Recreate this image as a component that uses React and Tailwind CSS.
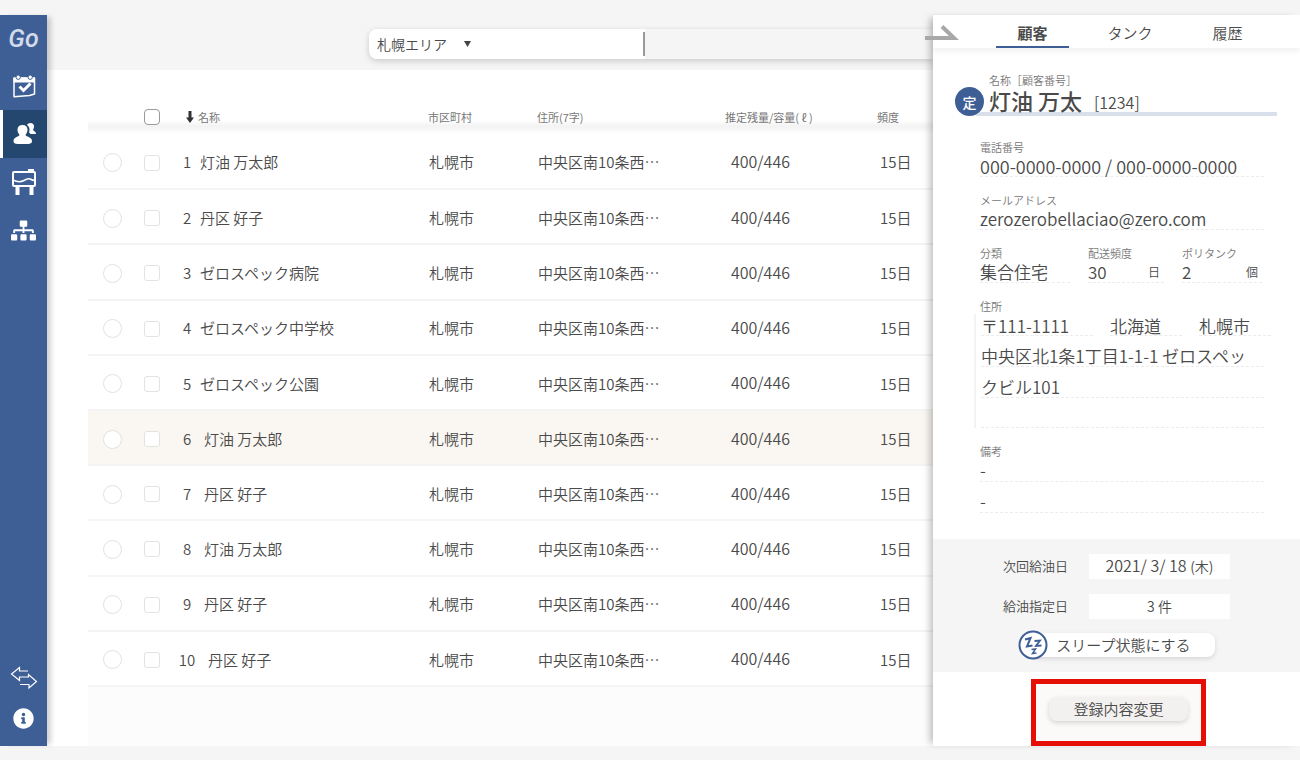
import React from 'react'
import { FaSitemap, FaInfoCircle } from 'react-icons/fa'

const customers = [
  { no: 1, name: '灯油 万太郎', gap: 'ml-0' },
  { no: 2, name: '丹区 好子', gap: 'ml-0' },
  { no: 3, name: 'ゼロスペック病院', gap: 'ml-0' },
  { no: 4, name: 'ゼロスペック中学校', gap: 'ml-0' },
  { no: 5, name: 'ゼロスペック公園', gap: 'ml-0' },
  { no: 6, name: '灯油 万太郎', gap: 'ml-1', active: true },
  { no: 7, name: '丹区 好子', gap: 'ml-1' },
  { no: 8, name: '灯油 万太郎', gap: 'ml-1' },
  { no: 9, name: '丹区 好子', gap: 'ml-1' },
  { no: 10, name: '丹区 好子', gap: 'ml-2' },
]

const CalendarIcon = () => (
  <svg width="24" height="24" viewBox="0 0 24 24" fill="none" stroke="currentColor">
    <path d="M2 4h20.500v16l-5 1.500-15.500 1.300z" strokeWidth="1.500" strokeLinejoin="round" />
    <path d="M2 4h20.500v4H2z" fill="currentColor" strokeWidth="1" />
    <circle cx="6.200" cy="3.200" r="2.200" fill="currentColor" stroke="#3e5f96" strokeWidth="1" />
    <circle cx="18.200" cy="3.200" r="2.200" fill="currentColor" stroke="#3e5f96" strokeWidth="1" />
    <path d="M7.500 12.500l4 4 7-7" strokeWidth="3" />
  </svg>
)

const UsersIcon = () => (
  <svg width="24" height="24" viewBox="0 0 24 24" fill="currentColor">
    <path d="M14 3c1-2.500 6.500-3 7 .8.200 1.700-.4 3-1 3.900.3 1.300 2.800 1.300 3 4.300h-5.500c-.5-.8-1-1.200-1.500-1.500 1-2.500.8-5.500-2-7.500z" />
    <path d="M9.500 3c3.200 0 5 2 5 4.800 0 2.200-.8 3.800-2 4.900 0 2.300 6.500 1.800 6.500 6.300 0 2.200-1.500 3-4 3H4.500c-2.500 0-4-.8-4-3 0-4.500 6-4 6-6.300-1.200-1.100-2-2.700-2-4.900C4.500 5 6.300 3 9.500 3z" />
  </svg>
)

const TankIcon = () => (
  <svg width="26" height="28" viewBox="0 0 26 28" fill="none" stroke="currentColor">
    <rect x="2" y="4" width="22" height="14" rx="1" strokeWidth="2" />
    <path d="M17 2.500h6" strokeWidth="3" />
    <path d="M2 12c4 2 8 2 11 .5s4-2.500 6-1.500 3 1.500 5 1.500" strokeWidth="1.500" />
    <path d="M6.500 18v9M20.500 18v9" strokeWidth="4" />
  </svg>
)

const ExchangeIcon = () => (
  <svg width="28" height="24" viewBox="0 0 28 24" fill="none" stroke="currentColor" strokeWidth="1.200">
    <path d="M18 5H9.500V1.500L1.500 8l8 6.500V11H18.500V8.500L26.500 15.500 19 22v-3.500h-9" />
  </svg>
)

const SleepIcon = () => (
  <svg className="relative shrink-0" width="30" height="30" viewBox="0 0 30 30" fill="none" stroke="#3e5f96">
    <circle cx="15" cy="15" r="13.500" fill="white" strokeWidth="2" />
    <path d="M7 9.500l5.500-1.500-3.500 8.500 5.500-1" strokeWidth="2" />
    <path d="M16.500 11l5.500-.5-4 5.500 5.500-.5" strokeWidth="1.800" />
    <path d="M13.500 19.500l4-.5-3 4.500 4-.5" strokeWidth="1.500" />
  </svg>
)

const NavItem = ({ label, active, children }) => (
  <button
    aria-label={label}
    className={`flex h-12 w-full items-center justify-center text-white ${active ? 'border-l-3 border-white bg-[#24476f]' : ''}`}
  >
    {children}
  </button>
)

const Sidebar = () => (
  <nav className="relative flex w-[47px] shrink-0 flex-col bg-[#3e5f96] shadow-[6px_0_5px_-2px_rgba(0,0,0,0.18)]">
    <div className="flex h-12 items-center justify-center font-['Roboto'] text-[25px] font-medium italic text-[#d3daea]">Go</div>
    <div className="-mt-px">
      <NavItem label="カレンダー"><CalendarIcon /></NavItem>
      <NavItem label="顧客" active><UsersIcon /></NavItem>
      <NavItem label="タンク"><TankIcon /></NavItem>
      <NavItem label="組織"><FaSitemap size={25} /></NavItem>
    </div>
    <div className="mt-auto pb-2">
      <button aria-label="切り替え" className="flex h-10 w-full items-center justify-center text-white"><ExchangeIcon /></button>
      <button aria-label="情報" className="flex h-10 w-full items-center justify-center text-white"><FaInfoCircle size={21} /></button>
    </div>
  </nav>
)

const SearchBar = () => (
  <div className="flex h-[55px] bg-[#f5f5f5] pl-[322px] pt-[14px]">
    <div className="flex h-[30px] flex-1 items-center rounded-l-lg bg-white shadow-[0_2px_6px_rgba(0,0,0,0.18)]">
      <div className="relative w-[274px] shrink-0">
        <select aria-label="エリア" className="h-[30px] w-full appearance-none bg-transparent pl-2 text-sm outline-none">
          <option>札幌エリア</option>
        </select>
        <svg className="pointer-events-none absolute left-[95px] top-3" width="7" height="6" viewBox="0 0 7 6" fill="#444">
          <path d="M0 0h7L3.500 6z" />
        </svg>
      </div>
      <div className="h-6 w-[2px] shrink-0 bg-[#999]" />
      <input aria-label="検索" className="h-full min-w-0 flex-1 bg-[#f5f5f5] px-2 text-sm outline-none" />
    </div>
  </div>
)

const CustomerTable = () => (
  <table className="h-[617px] w-full table-fixed border-collapse text-left text-[15px]">
    <colgroup>
      <col className="w-12" />
      <col className="w-8" />
      <col className="w-[260px]" />
      <col className="w-[109px]" />
      <col className="w-[188px]" />
      <col className="w-[152px]" />
      <col />
    </colgroup>
    <thead>
      <tr className="h-[64px] bg-[linear-gradient(to_bottom,white_50px,#f3f3f3_56px,#f5f5f5_58px,white_64px)] text-[11px] text-[#777]">
        <th></th>
        <th className="pt-[30px]">
          <input type="checkbox" aria-label="すべて選択" className="mx-auto block size-4 appearance-none rounded border border-[#999] bg-white" />
        </th>
        <th className="pl-[18px] pt-[30px] font-normal">
          <div className="flex items-center gap-1">
            <svg width="8" height="12" viewBox="0 0 8 12" fill="#333">
              <path d="M2.500 0h3v6.500H8L4 12 0 6.500h2.500z" />
            </svg>
            名称
          </div>
        </th>
        <th className="pt-[30px] font-normal">市区町村</th>
        <th className="pt-[30px] font-normal">住所(7字)</th>
        <th className="pt-[30px] font-normal">推定残量/容量( ℓ )</th>
        <th className="pt-[30px] font-normal">頻度</th>
      </tr>
    </thead>
    <tbody>
      {customers.map((c) => (
        <tr key={c.no} className={`h-[55px] border-b-2 border-[#f4f4f4] ${c.active ? 'bg-[#faf7f2]' : ''}`}>
          <td className="pt-[3px]">
            <input type="radio" name="customer" aria-label={c.name} className="mx-auto block size-[19px] appearance-none rounded-full border border-[#e2e2e2] bg-white" />
          </td>
          <td className="pt-[3px]">
            <input type="checkbox" aria-label={c.name} className="mx-auto block size-4 appearance-none rounded-[3px] border border-[#e2e2e2] bg-white" />
          </td>
          <td className="pl-[6px] pt-[3px]">
            <div className="flex items-center">
              <span className="w-[26px] text-center">{c.no}</span>
              <span className={c.gap}>{c.name}</span>
            </div>
          </td>
          <td className="pl-px pt-[3px]">札幌市</td>
          <td className="pl-px pt-[3px]">中央区南10条西…</td>
          <td className="pl-[6px] text-base">400/446</td>
          <td className="pl-[3px] pt-[3px]">15日</td>
        </tr>
      ))}
    </tbody>
  </table>
)

const dashed = 'border-b border-dashed border-[#ececec]'

const Field = ({ label, unit, className = '', size = 'text-[17px]', children }) => (
  <div className={className}>
    <div className="h-4 text-[11px] leading-4 text-[#777]">{label}</div>
    <div className={`flex h-[22px] items-center justify-between ${size} ${dashed}`}>
      {children}
      {unit && <span className="mr-1 text-xs">{unit}</span>}
    </div>
  </div>
)

const DetailPanel = () => (
  <aside className="relative flex w-[367px] shrink-0 flex-col bg-white shadow-[-6px_0_7px_-3px_rgba(0,0,0,0.25)]">
    <button aria-label="閉じる" className="absolute -left-2 top-[10px]">
      <svg width="34" height="16" viewBox="0 0 34 16" fill="none" stroke="#a8a8a8">
        <path d="M0 13h29L17 1.500" strokeWidth="4" />
      </svg>
    </button>

    <div className="flex h-[33px] shrink-0 justify-between pl-[63px] pr-9 text-[15px] shadow-[0_4px_5px_rgba(0,0,0,0.05)]">
      <button className="w-[73px] border-b-2 border-[#3e5f96] pt-[6px] font-bold">顧客</button>
      <button className="w-[73px] pt-1">タンク</button>
      <button className="w-[73px] pt-1">履歴</button>
    </div>

    {/* Name */}
    <div className="mt-6 flex items-end pl-[22px] pr-[23px]">
      <div className="relative -mr-2 flex size-[29px] shrink-0 items-center justify-center rounded-full bg-[#3e5f96] text-sm font-medium text-white">定</div>
      <div className="min-w-0 flex-1 border-b-4 border-[#d8e0ec] pl-[13px]">
        <div className="h-4 text-[11px] leading-4 text-[#777]">名称［顧客番号］</div>
        <div className="flex h-6 items-center gap-3 leading-6">
          <span className="text-[22px] font-medium">灯油 万太</span>
          <span className="pt-1 text-base">[1234]</span>
        </div>
      </div>
    </div>

    <div className="flex flex-col gap-[15px] pb-[26px] pl-[47px] pr-9 pt-[23px]">
      <Field label="電話番号" size="text-lg">000-0000-0000 / 000-0000-0000</Field>
      <Field label="メールアドレス">zerozerobellaciao@zero.com</Field>
      <div className="flex gap-[18px]">
        <Field label="分類" className="w-[90px]">集合住宅</Field>
        <Field label="配送頻度" unit="日" className="w-[76px]">30</Field>
        <Field label="ポリタンク" unit="個" className="w-[80px]">2</Field>
      </div>

      {/* Address */}
      <div className="text-[17px]">
        <div className="h-4 text-[11px] leading-4 text-[#777]">住所</div>
        <div className="-ml-[6px] border-l-2 border-[#f3f3f3] pl-[5px]">
          <div className="flex h-[22px] gap-[17px]">
            <span className={`w-28 shrink-0 leading-6 ${dashed}`}>〒111-1111</span>
            <span className={`w-[72px] shrink-0 leading-6 ${dashed}`}>北海道</span>
            <span className={`w-[72px] shrink-0 leading-6 ${dashed}`}>札幌市</span>
          </div>
          <div className={`h-[31px] pt-2 leading-6 whitespace-nowrap ${dashed}`}>中央区北1条1丁目1-1-1 ゼロスペッ</div>
          <div className={`h-[31px] pt-2 leading-6 ${dashed}`}>クビル101</div>
          <div className={`h-[30px] ${dashed}`} />
        </div>
      </div>

      {/* Notes */}
      <div className="text-[17px]">
        <div className="h-4 text-[11px] leading-4 text-[#777]">備考</div>
        <div className={`h-[23px] leading-[22px] ${dashed}`}>-</div>
        <div className={`h-[31px] pt-2 leading-[22px] ${dashed}`}>-</div>
      </div>
    </div>

    {/* Refuel schedule */}
    <div className="flex flex-col items-center bg-[#f5f5f5] pb-3 pt-[15px]">
      <dl className="grid grid-cols-[86px_141px] gap-y-[15px] text-[13px]">
        <dt className="leading-6">次回給油日</dt>
        <dd className="h-[25px] bg-white text-center text-base leading-[22px]">
          2021/ 3/ 18 <span className="text-sm">(木)</span>
        </dd>
        <dt className="leading-6">給油指定日</dt>
        <dd className="h-[25px] bg-white text-center text-sm leading-6">3 件</dd>
      </dl>
      <button className="mt-[11px] flex items-center text-[15px]">
        <SleepIcon />
        <span className="-ml-4 h-6 rounded-lg bg-white pl-6 pr-6 leading-6 shadow-[0_2px_5px_rgba(0,0,0,0.12)]">スリープ状態にする</span>
      </button>
    </div>

    <div className="flex justify-center pl-1 pt-[7px]">
      <div className="flex h-[67px] w-[175px] items-start justify-center border-5 border-[#e60f05] bg-[#fbfaf9] pt-[13px]">
        <button className="h-6 w-[139px] rounded-lg bg-[#f3f1ef] text-[15px] leading-6 shadow-[0_2px_5px_rgba(0,0,0,0.15)]">登録内容変更</button>
      </div>
    </div>
  </aside>
)

const App = () => {
  return (
    <div className="flex min-h-screen overflow-hidden bg-[#f5f5f5] pb-[14px] pt-[15px] font-['Noto_Sans_CJK_JP',sans-serif] font-[350] text-[#4a4a4a]">
      <Sidebar />
      <main className="flex min-w-0 flex-1 flex-col bg-white">
        <SearchBar />
        <div className="flex flex-1 flex-col pl-[41px]">
          <CustomerTable />
          <div className="flex-1 bg-[#fcfcfc]" />
        </div>
      </main>
      <DetailPanel />
    </div>
  )
}

export default App
